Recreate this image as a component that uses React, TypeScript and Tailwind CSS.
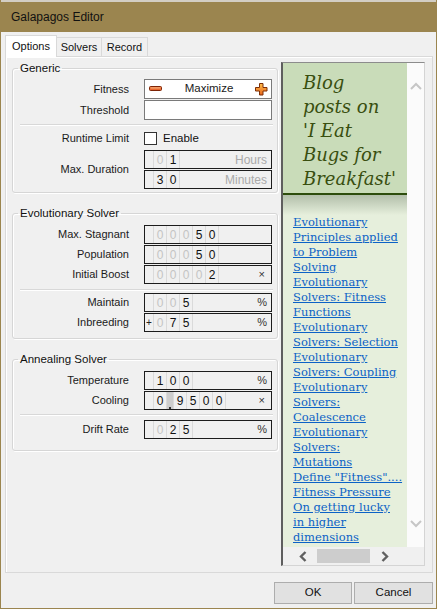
import type { ReactNode } from 'react';

type Cell = { ch: string; dim: boolean };

function toCells(value: string, dimCount: number): Cell[] {
  return value.split('').map((ch, i) => ({ ch, dim: i < dimCount }));
}

function NumBox({
  value,
  dim = 0,
  prefix,
  unit,
  grayUnit,
}: {
  value: string;
  dim?: number;
  prefix?: string;
  unit?: string;
  grayUnit?: boolean;
}) {
  return (
    <div className="flex h-[19px] w-[128px] items-stretch border border-[#1c1c1c] bg-[#f0f0f0] text-[12px] leading-none">
      <span className="flex w-[8px] items-center justify-center text-[10px] text-[#222]">{prefix}</span>
      <div className="flex border-l border-[#dadada]">
        {toCells(value, dim).map((c, i) =>
          c.ch === '.' ? (
            <span key={i} className="flex w-[7px] items-end justify-center border-r border-[#dadada] bg-[#cdcdcd]">
              <span className="h-[2px] w-[2px] bg-[#333]" />
            </span>
          ) : (
            <span
              key={i}
              className={
                c.dim
                  ? 'flex w-[13px] items-center justify-center border-r border-[#dadada] text-[#c4c4c4]'
                  : 'flex w-[13px] items-center justify-center border-r border-[#dadada] text-[#111]'
              }
            >
              {c.ch}
            </span>
          )
        )}
      </div>
      {unit && (
        <span
          className={
            grayUnit
              ? 'ml-auto flex items-center pr-[4px] text-[12px] text-[#a9a9a9]'
              : unit === '×'
                ? 'ml-auto flex items-center pr-[6px] text-[11px] text-[#333]'
                : 'ml-auto flex items-center pr-[4px] text-[11px] text-[#333]'
          }
        >
          {unit}
        </span>
      )}
    </div>
  );
}

function Row({ label, children, className = '' }: { label: string; children: ReactNode; className?: string }) {
  return (
    <div className={`flex items-center ${className}`}>
      <span className="w-[116px] text-right text-[11px] leading-[13px] text-[#1a1a1a]">{label}</span>
      <div className="ml-[15px]">{children}</div>
    </div>
  );
}

function Group({ title, children, className = '' }: { title: string; children: ReactNode; className?: string }) {
  return (
    <fieldset
      className={`w-[266px] rounded-[3px] border border-[#d6d6d6] shadow-[inset_1px_1px_0_#fff,1px_1px_0_#fff] ${className}`}
    >
      <legend className="ml-[5px] px-[2px] text-[11.5px] leading-[14px] text-[#111]">{title}</legend>
      {children}
    </fieldset>
  );
}

function Separator({ className = '' }: { className?: string }) {
  return <div className={`ml-[7px] mr-[4px] h-[2px] border-y border-t-[#d8d8d8] border-b-white ${className}`} />;
}

function Minus() {
  return (
    <svg width="14" height="6" viewBox="0 0 14 6">
      <rect x="0.5" y="0.5" width="12" height="4" rx="1" fill="#e9672e" stroke="#7d2406" />
      <rect x="1.5" y="1.3" width="10" height="1.2" fill="#f7b07a" />
    </svg>
  );
}

function Plus() {
  return (
    <svg width="13" height="13" viewBox="0 0 13 13">
      <defs>
        <linearGradient id="pl" x1="0" y1="0" x2="0" y2="1">
          <stop offset="0" stopColor="#ffc04a" />
          <stop offset="1" stopColor="#e8641c" />
        </linearGradient>
      </defs>
      <polygon
        points="4.5,0.5 8,0.5 8,4.5 12,4.5 12,8 8,8 8,12 4.5,12 4.5,8 0.5,8 0.5,4.5 4.5,4.5"
        fill="url(#pl)"
        stroke="#7d2f06"
      />
    </svg>
  );
}

function ChevronV({ up }: { up?: boolean }) {
  return (
    <svg width="12" height="8" viewBox="0 0 12 8">
      <path
        d={up ? 'M1 7 L6 2 L11 7' : 'M1 1 L6 6 L11 1'}
        fill="none"
        stroke="#c6c6c6"
        strokeWidth="2"
      />
    </svg>
  );
}

function ChevronH({ left }: { left?: boolean }) {
  return (
    <svg width="8" height="11" viewBox="0 0 8 11">
      <path
        d={left ? 'M6.5 1 L2 5.5 L6.5 10' : 'M1.5 1 L6 5.5 L1.5 10'}
        fill="none"
        stroke="#606060"
        strokeWidth="2.4"
      />
    </svg>
  );
}

const links = [
  ['Evolutionary', 'Principles applied', 'to Problem', 'Solving'],
  ['Evolutionary', 'Solvers: Fitness', 'Functions'],
  ['Evolutionary', 'Solvers: Selection'],
  ['Evolutionary', 'Solvers: Coupling'],
  ['Evolutionary', 'Solvers:', 'Coalescence'],
  ['Evolutionary', 'Solvers:', 'Mutations'],
  ['Define "Fitness"....'],
  ['Fitness Pressure'],
  ['On getting lucky', 'in higher', 'dimensions'],
];

function BlogPanel() {
  return (
    <div className="mt-[1px] flex h-[504px] w-[144px] flex-col border-t border-l-2 border-r border-b border-t-[#8c8c8c] border-l-[#5e5e5e] border-r-[#d4d4d4] border-b-[#d4d4d4] font-['DejaVu_Serif',serif]">
      <div className="flex h-[484px]">
        <div className="flex w-[124px] flex-col overflow-hidden bg-[#e6efdc]">
          <div className="h-[132px] border-b-2 border-[#2d4d0c] bg-[#c9dcb9] pl-[20px] pt-[8px] text-[18px] italic leading-[24px] text-[#394f10]">
            Blog
            <br />
            posts on
            <br />
            'I Eat
            <br />
            Bugs for
            <br />
            Breakfast'
          </div>
          <div className="h-[20px] bg-gradient-to-b from-[#b2bfaa] to-[#e6efdc]" />
          <div className="flex flex-col pl-[10px] text-[11.5px] leading-[15px] whitespace-nowrap">
            {links.map((lines, i) => (
              <a key={i} className="text-[#0c62c6] underline">
                {lines.map((l, j) => (
                  <span key={j} className="block">
                    {l}
                  </span>
                ))}
              </a>
            ))}
          </div>
        </div>
        <div className="flex w-[17px] flex-col items-center justify-between bg-[#fbfbfb] pt-[19px] pb-[19px]">
          <ChevronV up />
          <ChevronV />
        </div>
      </div>
      <div className="flex h-[18px] items-center bg-[#f0f0f0]">
        <span className="ml-[16px] flex">
          <ChevronH left />
        </span>
        <span className="ml-[10px] h-[14px] w-[53px] bg-[#cdcdcd]" />
        <span className="ml-[11px] flex">
          <ChevronH />
        </span>
      </div>
    </div>
  );
}

export default function App() {
  return (
    <div className="flex h-[609px] w-[437px] flex-col border-x border-b border-[#9b854f] bg-[#f0f0f0] font-['Liberation_Sans',Arial,sans-serif] text-[#111]">
      <div className="h-[2px] bg-[#d3cec4]" />
      <div className="flex h-[30px] items-center bg-[#9b854f] pl-[10px] text-[12px] text-[#111]">Galapagos Editor</div>

      <div className="flex flex-col pl-[4px] pr-[3px]">
        <div className="flex h-[24px] items-end text-[11px]">
          <div className="relative z-10 -mb-[1px] flex h-[22px] w-[52px] items-center justify-center border border-b-0 border-[#d9d9d9] bg-white">
            Options
          </div>
          <div className="flex h-[19px] w-[45px] items-center justify-center border border-b-0 border-l-0 border-[#d9d9d9] pt-[1px]">
            Solvers
          </div>
          <div className="flex h-[19px] w-[46px] items-center justify-center border border-b-0 border-l-0 border-[#d9d9d9] pt-[1px]">
            Record
          </div>
        </div>

        <div className="flex h-[517px] w-[428px] items-start gap-[3px] border border-[#d9d9d9] pl-[6px] pt-[4px] shadow-[inset_1px_1px_0_#fff]">
          <div className="flex flex-col">
            <Group title="Generic" className="pb-[3px]">
              <Row label="Fitness" className="mt-[4px]">
                <div className="flex h-[20px] w-[128px] items-center justify-between border border-[#7a7a7a] bg-white pl-[4px] pr-[3px] text-[11.5px]">
                  <Minus />
                  <span className="text-[#1b1b1b]">Maximize</span>
                  <Plus />
                </div>
              </Row>
              <Row label="Threshold" className="mt-[1px]">
                <div className="h-[20px] w-[128px] border border-[#7a7a7a] bg-white" />
              </Row>
              <Separator className="mt-[4px]" />
              <Row label="Runtime Limit" className="mt-[6px]">
                <div className="flex h-[13px] items-center">
                  <span className="h-[13px] w-[13px] border border-[#333] bg-white" />
                  <span className="ml-[6px] text-[11.5px] leading-[13px]">Enable</span>
                </div>
              </Row>
              <Row label="Max. Duration" className="mt-[5px]">
                <div className="flex flex-col gap-[1px]">
                  <NumBox value="01" dim={1} unit="Hours" grayUnit />
                  <NumBox value="30" unit="Minutes" grayUnit />
                </div>
              </Row>
            </Group>

            <Group title="Evolutionary Solver" className="mt-[13px] pb-[6px]">
              <div className="mt-[5px] flex flex-col gap-[1px]">
                <Row label="Max. Stagnant">
                  <NumBox value="00050" dim={3} />
                </Row>
                <Row label="Population">
                  <NumBox value="00050" dim={3} />
                </Row>
                <Row label="Initial Boost">
                  <NumBox value="00002" dim={4} unit="×" />
                </Row>
              </div>
              <Separator className="mt-[5px]" />
              <div className="mt-[2px] flex flex-col gap-[1px]">
                <Row label="Maintain">
                  <NumBox value="005" dim={2} unit="%" />
                </Row>
                <Row label="Inbreeding">
                  <NumBox value="075" dim={1} prefix="+" unit="%" />
                </Row>
              </div>
            </Group>

            <Group title="Annealing Solver" className="mt-[13px] pb-[11px]">
              <div className="mt-[5px] flex flex-col gap-[1px]">
                <Row label="Temperature">
                  <NumBox value="100" unit="%" />
                </Row>
                <Row label="Cooling">
                  <NumBox value="0.9500" unit="×" />
                </Row>
              </div>
              <Separator className="mt-[4px]" />
              <Row label="Drift Rate" className="mt-[4px]">
                <NumBox value="025" dim={1} unit="%" />
              </Row>
            </Group>
          </div>

          <BlogPanel />
        </div>

        <div className="mt-[9px] flex justify-end gap-[2px] text-[11.5px]">
          <button className="h-[22px] w-[78px] border border-[#adadad] bg-[#e1e1e1] text-[#111]">OK</button>
          <button className="h-[22px] w-[79px] border border-[#adadad] bg-[#e1e1e1] text-[#111]">Cancel</button>
        </div>
      </div>
    </div>
  );
}
